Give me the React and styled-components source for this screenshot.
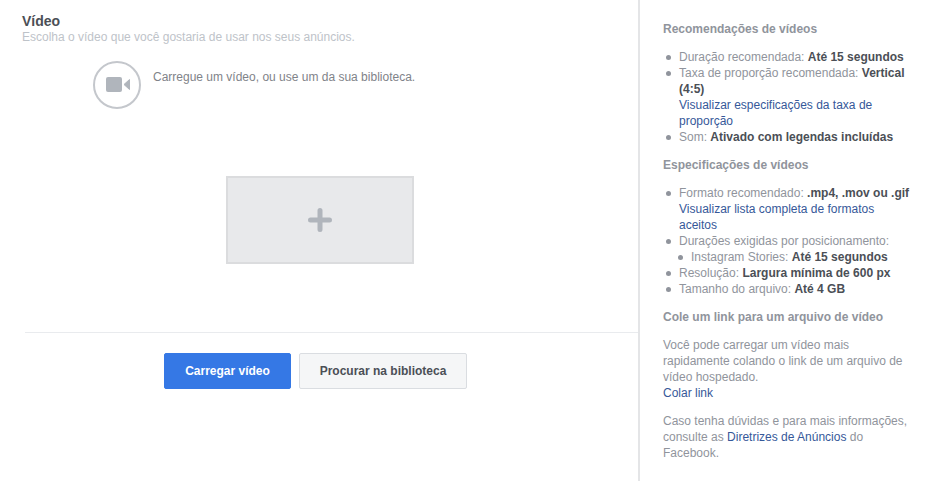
import React from "react";
import styled, { createGlobalStyle } from "styled-components";

const Global = createGlobalStyle`
  html, body {
    margin: 0;
    padding: 0;
    background: #fff;
  }
  body {
    font-family: "Liberation Sans", Arial, sans-serif;
    font-size: 12px;
    line-height: 16px;
    color: #90949c;
  }
`;

const Page = styled.div`
  display: flex;
  width: 935px;
  height: 481px;
  overflow: hidden;
`;

const Main = styled.section`
  width: 638px;
  flex: none;
  padding: 13px 0 0 22px;
  box-sizing: border-box;
`;

const Title = styled.h2`
  margin: 0;
  font-size: 14px;
  line-height: 16px;
  font-weight: 700;
  color: #4b4f56;
`;

const Subtitle = styled.p`
  margin: 0;
  color: #bec3c9;
`;

const Intro = styled.div`
  display: flex;
  gap: 12px;
  margin: 16px 0 0 71px;
  color: #7f8389;
`;

const IconCircle = styled.div`
  width: 48px;
  height: 48px;
  flex: none;
  box-sizing: border-box;
  border: 2px solid #c4c7cc;
  border-radius: 50%;
  display: flex;
  align-items: center;
  justify-content: center;
`;

const IntroText = styled.span`
  margin-top: 8px;
`;

const Drop = styled.div`
  width: 188px;
  height: 88px;
  box-sizing: border-box;
  margin: 67px 0 0 204px;
  background: #e8e9eb;
  border: 2px solid #dbdcde;
  display: flex;
  align-items: center;
  justify-content: center;
`;

const Divider = styled.hr`
  margin: 68px 0 0 3px;
  border: 0;
  border-top: 1px solid #e9ebee;
`;

const Actions = styled.div`
  display: flex;
  gap: 8px;
  margin: 20px 0 0 142px;
`;

const Button = styled.button`
  height: 36px;
  width: ${(p) => p.$width}px;
  padding: 0;
  box-sizing: border-box;
  border-radius: 2px;
  border: 1px solid ${(p) => (p.$primary ? "#3578e5" : "#dadde1")};
  background: ${(p) => (p.$primary ? "#3578e5" : "#f5f6f7")};
  color: ${(p) => (p.$primary ? "#fff" : "#4b4f56")};
  font-family: inherit;
  font-size: 12px;
  font-weight: 700;
`;

const Side = styled.aside`
  flex: 1;
  box-sizing: border-box;
  border-left: 2px solid #e4e5e7;
  padding: 21px 24px 0 23px;
`;

const Heading = styled.h3`
  margin: 0 0 12px;
  font-size: 12px;
  line-height: 16px;
  font-weight: 700;
  color: #90949c;
`;

const List = styled.ul`
  margin: 0 0 12px;
  padding: 0 0 0 16px;
  list-style: none;
`;

const Item = styled.li`
  position: relative;

  &::before {
    content: "";
    position: absolute;
    left: -13px;
    top: 6px;
    width: 5px;
    height: 5px;
    border-radius: 50%;
    background: #90949c;
  }
`;

const SubList = styled.ul`
  margin: 0;
  padding: 0 0 0 12px;
  list-style: none;
`;

const Strong = styled.b`
  color: #4b4f56;
`;

const Link = styled.a`
  color: #365899;
  text-decoration: none;
`;

const Para = styled.p`
  margin: 0 0 12px;
`;

const App = () => (
  <Page>
    <Global />
    <Main>
      <Title>Vídeo</Title>
      <Subtitle>Escolha o vídeo que você gostaria de usar nos seus anúncios.</Subtitle>
      <Intro>
        <IconCircle>
          <svg width="26" height="16" viewBox="0 0 26 16">
            <rect x="2" y="0" width="16" height="15" rx="2" fill="#b0b5bc" />
            <path d="M20 7.5 L25.5 2.5 V12.5 Z" fill="#b0b5bc" stroke="#b0b5bc" strokeLinejoin="round" />
          </svg>
        </IconCircle>
        <IntroText>Carregue um vídeo, ou use um da sua biblioteca.</IntroText>
      </Intro>
      <Drop>
        <svg width="24" height="24" viewBox="0 0 24 24">
          <path d="M12 2.5 V21.5 M2.5 12 H21.5" stroke="#b0b5bc" strokeWidth="5" strokeLinecap="round" />
        </svg>
      </Drop>
      <Divider />
      <Actions>
        <Button $primary $width={127}>Carregar vídeo</Button>
        <Button $width={168}>Procurar na biblioteca</Button>
      </Actions>
    </Main>
    <Side>
      <Heading>Recomendações de vídeos</Heading>
      <List>
        <Item>Duração recomendada: <Strong>Até 15 segundos</Strong></Item>
        <Item>
          Taxa de proporção recomendada: <Strong>Vertical (4:5)</Strong>
          <br />
          <Link>Visualizar especificações da taxa de proporção</Link>
        </Item>
        <Item>Som: <Strong>Ativado com legendas incluídas</Strong></Item>
      </List>
      <Heading>Especificações de vídeos</Heading>
      <List>
        <Item>
          Formato recomendado: <Strong>.mp4, .mov ou .gif</Strong>
          <br />
          <Link>Visualizar lista completa de formatos aceitos</Link>
        </Item>
        <Item>
          Durações exigidas por posicionamento:
          <SubList>
            <Item>Instagram Stories: <Strong>Até 15 segundos</Strong></Item>
          </SubList>
        </Item>
        <Item>Resolução: <Strong>Largura mínima de 600 px</Strong></Item>
        <Item>Tamanho do arquivo: <Strong>Até 4 GB</Strong></Item>
      </List>
      <Heading>Cole um link para um arquivo de vídeo</Heading>
      <Para>
        Você pode carregar um vídeo mais rapidamente colando o link de um arquivo de vídeo hospedado.
        <br />
        <Link>Colar link</Link>
      </Para>
      <Para>
        Caso tenha dúvidas e para mais informações, consulte as <Link>Diretrizes de Anúncios</Link> do Facebook.
      </Para>
    </Side>
  </Page>
);

export default App;
